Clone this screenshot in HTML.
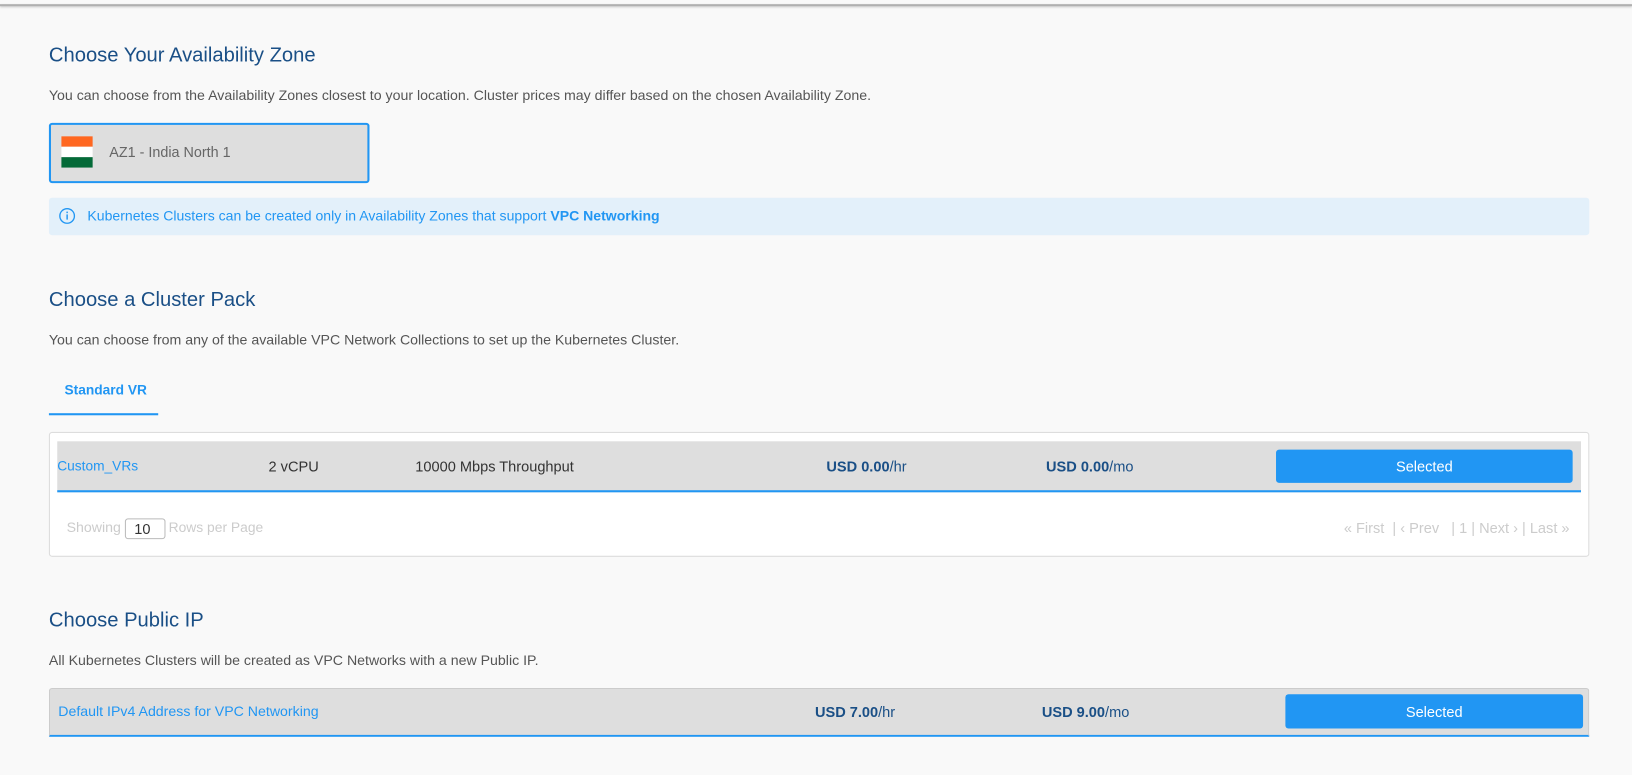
<!DOCTYPE html>
<html><head><meta charset="utf-8"><style>
*{margin:0;padding:0;box-sizing:border-box}
body{width:1632px;height:775px;background:#f9f9f9;font-family:"Liberation Sans",sans-serif;position:relative;overflow:hidden;color:#555}
#w{position:absolute;left:0;top:0;width:1568px;height:745px;transform:scale(1.0408);transform-origin:0 0}
.a{position:absolute;white-space:nowrap;line-height:16px}
.h{font-size:19.4px;color:#1a4f86;line-height:23px}
.p{font-size:13.6px;color:#555}
.t{font-size:14px}
.btn{position:absolute;background:#2196f3;color:#fff;font-size:14px;border-radius:3px;display:flex;align-items:center;justify-content:center}
</style></head><body>
<div id="w">
<div class="a" style="left:0;top:4px;width:1568px;height:2px;background:#b0b0b0;box-shadow:0 1px 2px #ccc"></div>

<div class="a h" style="left:47px;top:42px">Choose Your Availability Zone</div>
<div class="a p" style="left:47px;top:84px">You can choose from the Availability Zones closest to your location. Cluster prices may differ based on the chosen Availability Zone.</div>
<div class="a" style="left:47px;top:118px;width:308px;height:58px;background:#dedede;border:2px solid #2196f3;border-radius:3px"></div>
<div class="a" style="left:59px;top:131px;width:30px;height:10px;background:#ff6720"></div>
<div class="a" style="left:59px;top:141px;width:30px;height:10px;background:#fff"></div>
<div class="a" style="left:59px;top:151px;width:30px;height:10px;background:#046a38"></div>
<div class="a" style="left:105px;top:139px;font-size:13.8px;color:#666">AZ1 - India North 1</div>

<div class="a" style="left:47px;top:190px;width:1480px;height:36px;background:#e3f0fa;border-radius:3px"></div>
<svg class="a" style="left:56px;top:199px" width="17" height="17" viewBox="0 0 17 17"><circle cx="8.5" cy="8.5" r="7" fill="none" stroke="#2196f3" stroke-width="1.3"/><rect x="7.8" y="7" width="1.4" height="5" fill="#2196f3"/><rect x="7.8" y="4.3" width="1.4" height="1.5" fill="#2196f3"/></svg>
<div class="a" style="left:84px;top:200px;font-size:13.5px;color:#2196f3">Kubernetes Clusters can be created only in Availability Zones that support <b>VPC Networking</b></div>

<div class="a h" style="left:47px;top:277px">Choose a Cluster Pack</div>
<div class="a p" style="left:47px;top:319px">You can choose from any of the available VPC Network Collections to set up the Kubernetes Cluster.</div>
<div class="a" style="left:62px;top:367px;font-size:13.2px;font-weight:bold;color:#2196f3">Standard VR</div>
<div class="a" style="left:47px;top:397px;width:105px;height:2px;background:#2196f3"></div>

<div class="a" style="left:47px;top:415px;width:1480px;height:120px;background:#fff;border:1px solid #ddd;border-radius:3px"></div>
<div class="a" style="left:55px;top:424px;width:1464px;height:49px;background:#dedede;border-bottom:2px solid #2196f3"></div>
<div class="a" style="left:55px;top:440px;font-size:13.2px;color:#2196f3">Custom_VRs</div>
<div class="a t" style="left:258px;top:440px;color:#333">2 vCPU</div>
<div class="a t" style="left:399px;top:440px;color:#333">10000 Mbps Throughput</div>
<div class="a t" style="left:794px;top:440px;color:#1a4f86"><b>USD 0.00</b>/hr</div>
<div class="a t" style="left:1005px;top:440px;color:#1a4f86"><b>USD 0.00</b>/mo</div>
<div class="btn" style="left:1226px;top:432px;width:285px;height:32px">Selected</div>
<div class="a" style="left:64px;top:499px;font-size:13.6px;color:#ccc">Showing</div>
<div class="a" style="left:120px;top:498px;width:39px;height:20px;border:1px solid #bbb;border-radius:3px;font-size:14px;color:#333;padding:1px 0 0 8px">10</div>
<div class="a" style="left:162px;top:499px;font-size:13.3px;color:#ccc">Rows per Page</div>
<div class="a t" style="right:60px;top:499px;color:#ccc">« First &nbsp;| ‹ Prev &nbsp;&nbsp;| 1 | Next › | Last »</div>

<div class="a h" style="left:47px;top:585px">Choose Public IP</div>
<div class="a p" style="left:47px;top:627px">All Kubernetes Clusters will be created as VPC Networks with a new Public IP.</div>
<div class="a" style="left:47px;top:661px;width:1480px;height:47px;background:#dedede;border:1px solid #ccc;border-bottom:2px solid #2196f3;border-radius:3px 3px 0 0"></div>
<div class="a" style="left:56px;top:676px;font-size:13.6px;color:#2196f3">Default IPv4 Address for VPC Networking</div>
<div class="a t" style="left:783px;top:676px;color:#1a4f86"><b>USD 7.00</b>/hr</div>
<div class="a t" style="left:1001px;top:676px;color:#1a4f86"><b>USD 9.00</b>/mo</div>
<div class="btn" style="left:1235px;top:667px;width:286px;height:33px">Selected</div>
</div>
</body></html>
